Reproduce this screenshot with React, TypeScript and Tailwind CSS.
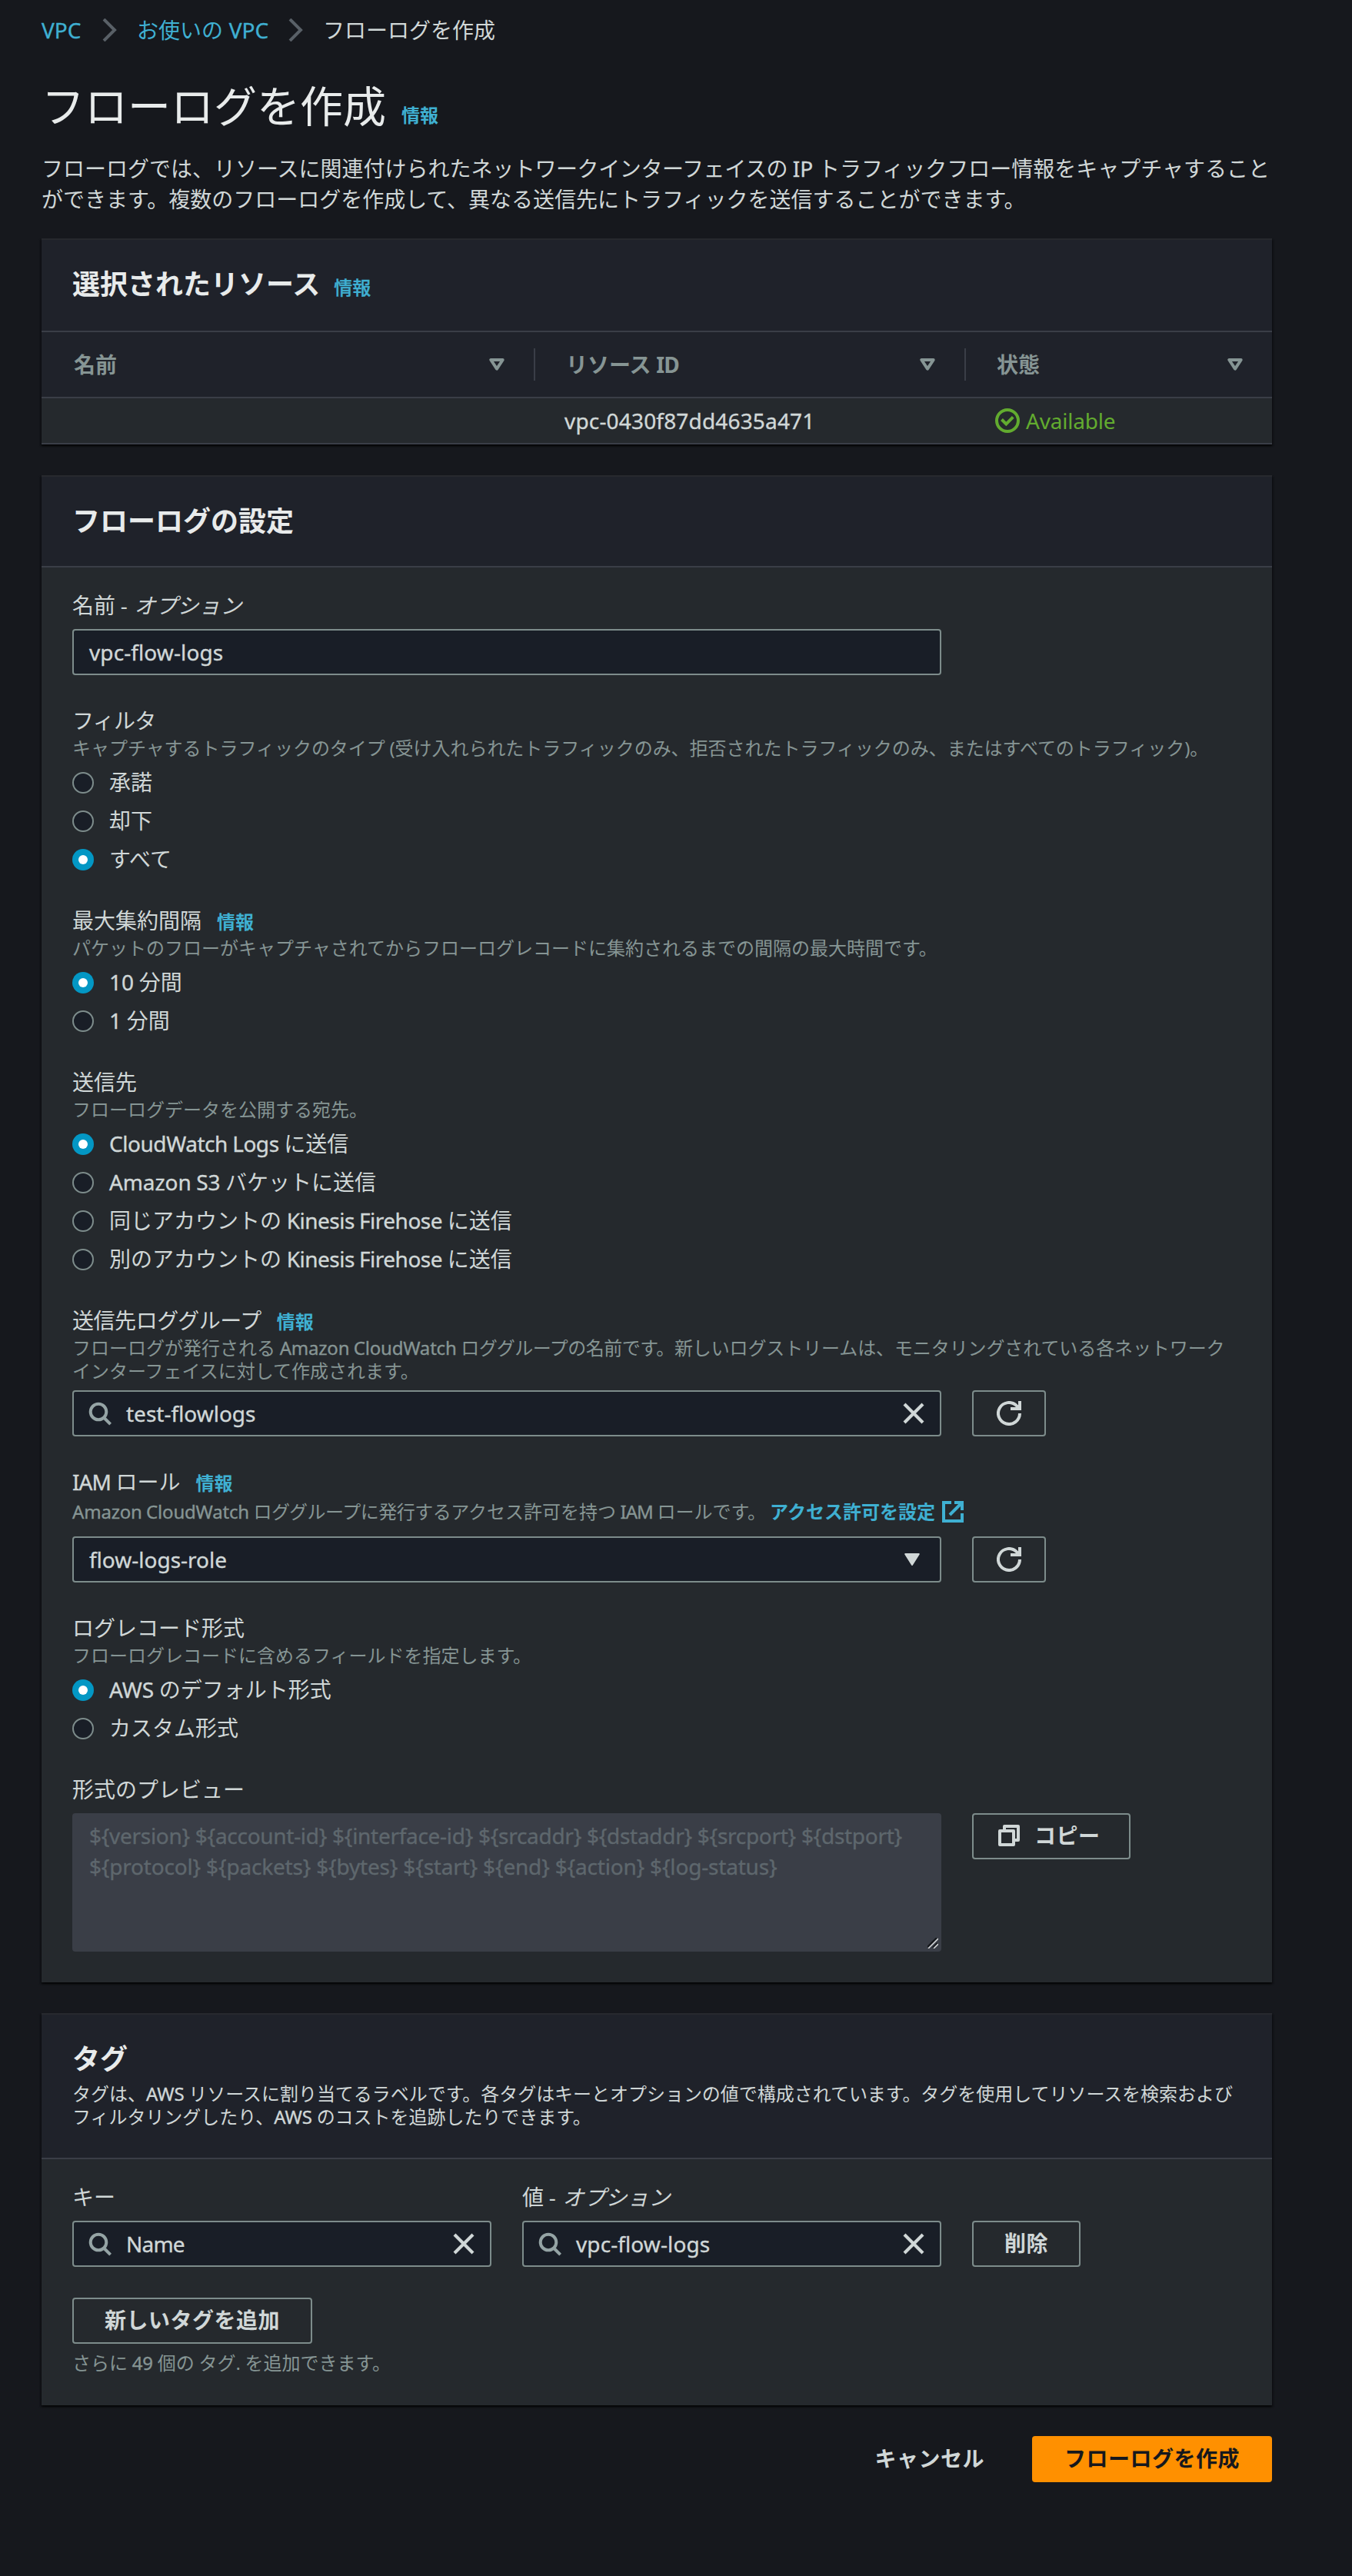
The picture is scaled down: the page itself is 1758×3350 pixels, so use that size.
import React from "react";

const Info = ({ className = "font-bold" }: { className?: string }) => (
  <a className={"text-[24px] text-[#3fb0d2] " + className}>情報</a>
);

/* Latin runs are set slightly heavier than the surrounding Japanese text. */
const Latin = ({ className = "", children }: { className?: string; children: React.ReactNode }) => (
  <span className={"[-webkit-text-stroke:0.35px_currentColor] " + className}>{children}</span>
);

const SearchIcon = () => (
  <svg width="32" height="32" viewBox="0 0 32 32" fill="none" stroke="#95a4a5" strokeWidth="4">
    <circle cx="14" cy="14" r="10.3" />
    <path d="M21 21.5l8.6 8.6" />
  </svg>
);

const CloseIcon = () => (
  <svg width="28" height="28" viewBox="0 0 28 28" fill="none" stroke="#d0d7d7" strokeWidth="4.2">
    <path d="M2 2l24 24M26 2L2 26" />
  </svg>
);

const RefreshIcon = () => (
  <svg width="32" height="32" viewBox="0 0 32 32" fill="none" stroke="#d0d7d7" strokeWidth="4">
    <path d="M30 16a14 14 0 1 1-4.1-9.9L30 10" />
    <path d="M30 0v10H18" />
  </svg>
);

const CaretIcon = () => (
  <svg width="20" height="16" viewBox="0 0 20 16" fill="#d0d7d7" stroke="#d0d7d7" strokeWidth="2" strokeLinejoin="round">
    <path d="M1.2 1h17.6L10 15z" />
  </svg>
);

const SortIcon = () => (
  <svg width="20" height="16" viewBox="0 0 20 16" fill="none" stroke="#869594" strokeWidth="4" strokeLinejoin="round">
    <path d="M2.3 2h15.4L10 13.6z" />
  </svg>
);

const CheckIcon = () => (
  <svg width="32" height="32" viewBox="0 0 32 32" fill="none" stroke="#62ab2f" strokeWidth="4">
    <circle cx="16" cy="16" r="14" />
    <path d="M8.5 14.5l5.8 5.8 9-9" />
  </svg>
);

const CopyIcon = () => (
  <svg width="28" height="28" viewBox="0 0 28 28" fill="none" stroke="#d0d7d7" strokeWidth="4" strokeLinejoin="round">
    <path d="M2 8h18v18H2z" />
    <path d="M8 8V2h18v18h-6" />
  </svg>
);

const ExternalIcon = () => (
  <svg width="28" height="28" viewBox="0 0 28 28" fill="none" stroke="#3fb0d2" strokeWidth="4">
    <path d="M12 2H2v24h24V16" />
    <path d="M16 2h10v10M26 2L10 18" />
  </svg>
);

const Chevron = () => (
  <svg width="19" height="30" viewBox="0 0 19 30" fill="none" stroke="#596067" strokeWidth="4">
    <path d="M2 1l14 14L2 29" />
  </svg>
);

const Radio = ({ checked = false, children }: { checked?: boolean; children: React.ReactNode }) => (
  <div className="flex h-10 items-center">
    {checked ? (
      <span className="flex size-7 items-center justify-center rounded-full bg-[#0397c4]">
        <span className="size-3 rounded-full bg-white" />
      </span>
    ) : (
      <span className="size-7 rounded-full border-2 border-[#7d8c8b] bg-[#191e27]" />
    )}
    <span className="ml-5 pb-0.5 leading-[38px]">{children}</span>
  </div>
);

const Radios = ({ children }: { children: React.ReactNode }) => (
  <div className="mt-2.5 flex flex-col gap-2.5">{children}</div>
);

const Label = ({ children }: { children: React.ReactNode }) => (
  <div className="h-10 leading-[38px]">{children}</div>
);

const Hint = ({ className = "", children }: { className?: string; children: React.ReactNode }) => (
  <p className={"text-[24px] leading-[30px] text-[#869594] " + className}>{children}</p>
);

const Box = ({ className = "w-[1130px]", children }: { className?: string; children: React.ReactNode }) => (
  <div className={"flex h-[60px] items-center rounded-[4px] border-2 border-[#7d8c8b] bg-[#191e27] px-5 " + className}>
    {children}
  </div>
);

const SearchBox = ({ className, children }: { className?: string; children: React.ReactNode }) => (
  <Box className={className}>
    <span className="-ml-0.5"><SearchIcon /></span>
    <span className="ml-[18px] flex-1 pb-px">{children}</span>
    <CloseIcon />
  </Box>
);

const Button = ({ className = "px-[42px]", children }: { className?: string; children: React.ReactNode }) => (
  <button className={"flex h-[60px] items-center rounded-[4px] border-2 border-[#7d8c8b] pb-0.5 font-bold tracking-[0.5px] " + className}>
    {children}
  </button>
);

const RefreshButton = () => (
  <button className="flex h-[60px] w-24 items-center justify-center rounded-[4px] border-2 border-[#7d8c8b]">
    <RefreshIcon />
  </button>
);

const Card = ({ children }: { children: React.ReactNode }) => (
  <section className="border-t-2 border-[#27292e] bg-[#25292d] shadow-[0_2px_2px_rgba(0,0,0,0.55),2px_2px_2px_rgba(0,0,0,0.25),-2px_2px_2px_rgba(0,0,0,0.25)]">
    {children}
  </section>
);

const CardHeader = ({ className = "h-[120px]", children }: { className?: string; children: React.ReactNode }) => (
  <header className={"border-b-2 border-[#3a3e47] bg-[#1f222a] px-10 pt-9 " + className}>{children}</header>
);

const Heading = ({ children }: { children: React.ReactNode }) => (
  <h2 className="text-[36px] leading-[44px] font-bold text-[#e8ebeb]">{children}</h2>
);

export default function App() {
  return (
    <div
      lang="ja"
      className="h-[3350px] w-[1758px] overflow-hidden bg-[#16181d] pl-[54px] font-['Noto_Sans','Noto_Sans_CJK_JP',sans-serif] text-[28px] leading-10 whitespace-nowrap text-[#d0d7d7] [word-spacing:-0.6px]"
    >
      <div className="w-[1600px]">
        <nav className="flex items-center pt-[19px] text-[#3fb0d2]">
          <a className="w-[79px]"><Latin>VPC</Latin></a>
          <Chevron />
          <a className="ml-[26px] w-[197px]">お使いの <Latin className="ml-px">VPC</Latin></a>
          <Chevron />
          <span className="ml-[26px] text-[#d0d7d7]">フローログを作成</span>
        </nav>

        <h1 className="mt-[42px] flex items-baseline text-[56px] leading-[73px] text-[#e8ebeb]">
          フローログを作成
          <span className="ml-5 leading-[30px]"><Info /></span>
        </h1>

        <p className="mt-[25px] mb-[31px]">
          フローログでは、リソースに関連付けられた
          <span className="tracking-[-0.4px]">ネットワークインターフェイスの</span> <Latin>IP</Latin> トラフィックフロー情報をキャプチャすること
          <br />
          ができます。複数のフローログを作成して、異なる送信先にトラフィックを送信することができます。
        </p>

        <div className="flex flex-col gap-10">
          <Card>
            <CardHeader>
              <div className="flex items-baseline gap-[18px]">
                <Heading>選択されたリソース</Heading>
                <Info className="font-medium [-webkit-text-stroke:0.4px_currentColor]" />
              </div>
            </CardHeader>
            <div className="flex h-[86px] items-center border-b-2 border-[#3a3e47] bg-[#1f222a] font-bold text-[#869594]">
              <div className="flex h-[42px] w-[642px] items-center justify-between border-r-2 border-[#3a3e47] pr-[38px] pl-[42px]">
                名前
                <SortIcon />
              </div>
              <div className="flex h-[42px] w-[560px] items-center justify-between border-r-2 border-[#3a3e47] pr-[38px] pl-10">
                <span>リソース <span className="tracking-[-1px]">ID</span></span>
                <SortIcon />
              </div>
              <div className="flex h-[42px] flex-1 items-center justify-between pr-[38px] pl-10">
                状態
                <SortIcon />
              </div>
            </div>
            <div className="flex h-[60px] items-center border-b-2 border-[#3a3e47] pl-[680px]">
              <span className="w-[560px] tracking-[0.17px]"><Latin>vpc-0430f87dd4635a471</Latin></span>
              <CheckIcon />
              <span className="ml-2 tracking-[-0.2px] text-[#62ab2f]">Available</span>
            </div>
          </Card>

          <Card>
            <CardHeader className="h-[118px]">
              <Heading>フローログの設定</Heading>
            </CardHeader>
            <div className="flex flex-col gap-10 px-10 pt-[30px] pb-10">
              <div>
                <Label>名前 - <i className="ml-0.5">オプション</i></Label>
                <div className="mt-2.5"><Box><span className="pb-px tracking-[0.1px]"><Latin>vpc-flow-logs</Latin></span></Box></div>
              </div>
              <div>
                <Label><span className="tracking-[-0.7px]">フィルタ</span></Label>
                <Hint className="tracking-[-0.03px]">キャプチャするトラフィックのタイプ (受け入れられたトラフィックのみ、拒否されたトラフィックのみ、またはすべてのトラフィック)。</Hint>
                <Radios>
                  <Radio>承諾</Radio>
                  <Radio>却下</Radio>
                  <Radio checked>すべて</Radio>
                </Radios>
              </div>
              <div>
                <Label>最大集約間隔<span className="ml-5"><Info /></span></Label>
                <Hint>パケットのフローがキャプチャされてからフローログレコードに集約されるまでの間隔の最大時間です。</Hint>
                <Radios>
                  <Radio checked><Latin>10</Latin> 分間</Radio>
                  <Radio><Latin>1</Latin> 分間</Radio>
                </Radios>
              </div>
              <div>
                <Label>送信先</Label>
                <Hint>フローログデータを公開する宛先。</Hint>
                <Radios>
                  <Radio checked><Latin className="tracking-[-0.45px]">CloudWatch Logs</Latin> に送信</Radio>
                  <Radio><Latin className="tracking-[-0.1px]">Amazon S3</Latin> バケットに送信</Radio>
                  <Radio>同じアカウントの <Latin className="tracking-[-0.5px]">Kinesis Firehose</Latin> に送信</Radio>
                  <Radio>別のアカウントの <Latin className="tracking-[-0.5px]">Kinesis Firehose</Latin> に送信</Radio>
                </Radios>
              </div>
              <div>
                <Label><span className="tracking-[-0.45px]">送信先ロググループ</span><span className="ml-5"><Info /></span></Label>
                <Hint>
                  フローログが発行される <Latin className="tracking-[-0.2px]">Amazon CloudWatch</Latin> <span className="tracking-[-0.5px]">ロググループの名前です。</span>
                  <span className="tracking-[-0.1px]">新しいログストリームは、モニタリングされている各ネットワーク</span>
                  <br />
                  インターフェイスに対して作成されます。
                </Hint>
                <div className="mt-2.5 flex gap-10">
                  <SearchBox><Latin>test-flowlogs</Latin></SearchBox>
                  <RefreshButton />
                </div>
              </div>
              <div>
                <Label><Latin className="tracking-[-1px]">IAM</Latin> ロール<span className="ml-5"><Info /></span></Label>
                <div className="flex h-10 items-center text-[24px] leading-[36px] text-[#869594]">
                  <span className="pb-1">
                    <Latin className="tracking-[-0.2px]">Amazon CloudWatch</Latin> <span className="tracking-[-0.5px]">ロググループに発行する</span>アクセス許可を持つ <Latin className="tracking-[-1px]">IAM</Latin> ロールです。
                  </span>
                  <a className="ml-[5px] flex items-center font-bold text-[#3fb0d2]">
                    <span className="pb-1">アクセス許可を設定</span>
                    <span className="ml-[9px] pb-1"><ExternalIcon /></span>
                  </a>
                </div>
                <div className="mt-2.5 flex gap-10">
                  <Box className="w-[1130px] justify-between pr-[26px]">
                    <span className="pb-px"><Latin>flow-logs-role</Latin></span>
                    <CaretIcon />
                  </Box>
                  <RefreshButton />
                </div>
              </div>
              <div>
                <Label>ログレコード形式</Label>
                <Hint>フローログレコードに含めるフィールドを指定します。</Hint>
                <Radios>
                  <Radio checked><Latin>AWS</Latin> のデフォルト形式</Radio>
                  <Radio>カスタム形式</Radio>
                </Radios>
              </div>
              <div>
                <Label>形式のプレビュー</Label>
                <div className="mt-2.5 flex items-start gap-10">
                  <div className="relative h-[180px] w-[1130px] rounded-[4px] bg-[#3a3e47] px-[22px] pt-[9px] text-[#5e676d] [word-spacing:0px]">
                    <p className="tracking-[-0.29px]"><Latin>{"${version} ${account-id} ${interface-id} ${srcaddr} ${dstaddr} ${srcport} ${dstport}"}</Latin></p>
                    <p className="tracking-[-0.19px]"><Latin>{"${protocol} ${packets} ${bytes} ${start} ${end} ${action} ${log-status}"}</Latin></p>
                    <svg className="absolute right-1 bottom-1" width="14" height="14" viewBox="0 0 14 14" fill="none">
                      <path d="M0 12L12 0M7 13L13 7" stroke="#15171b" strokeWidth="2" />
                      <path d="M1 14L14 1M8 14L14 8" stroke="#cfd2d4" strokeWidth="1.6" />
                    </svg>
                  </div>
                  <Button className="w-[206px] pl-8">
                    <CopyIcon />
                    <span className="ml-[19px]">コピー</span>
                  </Button>
                </div>
              </div>
            </div>
          </Card>

          <Card>
            <CardHeader className="h-[188px]">
              <Heading>タグ</Heading>
              <p className="mt-2 text-[24px] leading-[30px] tracking-[-0.03px]">
                タグは、<Latin>AWS</Latin> リソースに割り当てるラベルです。各タグはキーとオプションの値で構成されています。タグを使用してリソースを検索および
                <br />
                フィルタリングしたり、<Latin>AWS</Latin> のコストを追跡したりできます。
              </p>
            </CardHeader>
            <div className="px-10 pt-[30px] pb-10">
              <div className="flex items-end gap-10">
                <div>
                  <Label>キー</Label>
                  <div className="mt-2.5"><SearchBox className="w-[545px]"><Latin className="tracking-[-0.8px]">Name</Latin></SearchBox></div>
                </div>
                <div>
                  <Label>値 - <i className="ml-0.5">オプション</i></Label>
                  <div className="mt-2.5"><SearchBox className="w-[545px]"><Latin className="tracking-[0.1px]">vpc-flow-logs</Latin></SearchBox></div>
                </div>
                <Button className="px-10">削除</Button>
              </div>
              <div className="mt-10 mb-2.5 flex">
                <Button className="px-10">新しいタグを追加</Button>
              </div>
              <Hint>さらに <Latin>49</Latin> 個の タグ. を追加できます。</Hint>
            </div>
          </Card>
        </div>

        <footer className="mt-10 flex justify-end gap-5 text-[28px] font-bold tracking-[0.5px]">
          <button className="h-[60px] px-[42px] pb-0.5">キャンセル</button>
          <button className="h-[60px] rounded-[4px] bg-[#ff9000] px-[42px] pb-0.5 text-[#16181d]">フローログを作成</button>
        </footer>
      </div>
    </div>
  );
}
